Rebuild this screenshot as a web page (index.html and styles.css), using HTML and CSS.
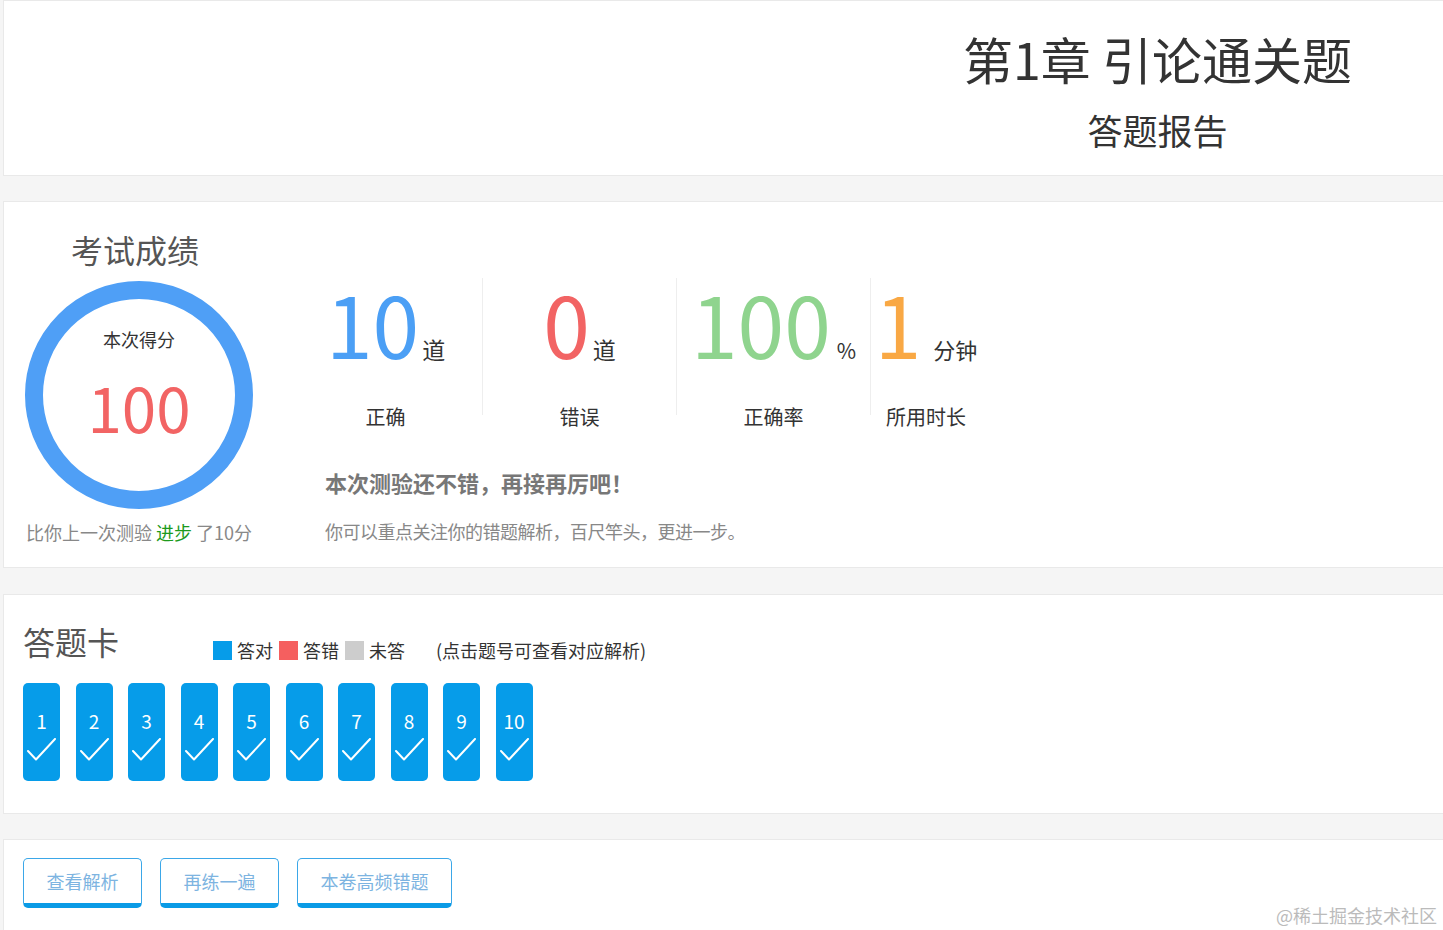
FILE: index.html
```html
<!DOCTYPE html>
<html lang="zh-CN">
<head>
    <meta charset="UTF-8">
    <meta name="viewport" content="width=device-width, initial-scale=1.0">
    <title>答题报告 - 第1章 引论通关题</title>
    <link rel="stylesheet" href="styles.css">
</head>
<body>
    <!-- 标题 -->
    <div class="panel header">
        <div class="header-title">
            <h1>第1章 引论通关题</h1>
            <h2>答题报告</h2>
        </div>
    </div>

    <!-- 考试成绩 -->
    <div class="panel result">
        <div class="score-box">
            <h3>考试成绩</h3>
            <div class="score-ring">
                <p class="score-label">本次得分</p>
                <p class="score-num">100</p>
            </div>
            <p class="score-compare">比你上一次测验 <span class="up">进步</span> 了10分</p>
        </div>

        <div class="detail">
            <div class="stats">
                <div class="stat">
                    <div class="stat-value"><span class="num blue">10</span><span class="unit">道</span></div>
                    <p class="stat-label">正确</p>
                </div>
                <div class="stat">
                    <div class="stat-value"><span class="num red">0</span><span class="unit">道</span></div>
                    <p class="stat-label">错误</p>
                </div>
                <div class="stat">
                    <div class="stat-value"><span class="num green">100</span><span class="unit small">%</span></div>
                    <p class="stat-label">正确率</p>
                </div>
                <div class="stat last">
                    <div class="stat-value"><span class="num orange">1</span><span class="unit wide">分钟</span></div>
                    <p class="stat-label">所用时长</p>
                </div>
            </div>
            <p class="comment">本次测验还不错，再接再厉吧！</p>
            <p class="advice">你可以重点关注你的错题解析，百尺竿头，更进一步。</p>
        </div>
    </div>

    <!-- 答题卡 -->
    <div class="panel card-panel">
        <div class="card-head">
            <h3>答题卡</h3>
            <div class="legend">
                <span class="dot dot-right"></span><span>答对</span>
                <span class="dot dot-wrong"></span><span>答错</span>
                <span class="dot dot-none"></span><span>未答</span>
                <span class="tip">(点击题号可查看对应解析)</span>
            </div>
        </div>
        <div class="cards">
            <div class="q-card"><span>1</span><svg viewBox="0 0 37 30"><polyline points="5,13 13,21.5 32,1"/></svg></div>
            <div class="q-card"><span>2</span><svg viewBox="0 0 37 30"><polyline points="5,13 13,21.5 32,1"/></svg></div>
            <div class="q-card"><span>3</span><svg viewBox="0 0 37 30"><polyline points="5,13 13,21.5 32,1"/></svg></div>
            <div class="q-card"><span>4</span><svg viewBox="0 0 37 30"><polyline points="5,13 13,21.5 32,1"/></svg></div>
            <div class="q-card"><span>5</span><svg viewBox="0 0 37 30"><polyline points="5,13 13,21.5 32,1"/></svg></div>
            <div class="q-card"><span>6</span><svg viewBox="0 0 37 30"><polyline points="5,13 13,21.5 32,1"/></svg></div>
            <div class="q-card"><span>7</span><svg viewBox="0 0 37 30"><polyline points="5,13 13,21.5 32,1"/></svg></div>
            <div class="q-card"><span>8</span><svg viewBox="0 0 37 30"><polyline points="5,13 13,21.5 32,1"/></svg></div>
            <div class="q-card"><span>9</span><svg viewBox="0 0 37 30"><polyline points="5,13 13,21.5 32,1"/></svg></div>
            <div class="q-card"><span>10</span><svg viewBox="0 0 37 30"><polyline points="5,13 13,21.5 32,1"/></svg></div>
        </div>
    </div>

    <!-- 操作按钮 -->
    <div class="panel actions">
        <button class="btn">查看解析</button>
        <button class="btn">再练一遍</button>
        <button class="btn">本卷高频错题</button>
        <span class="watermark">@稀土掘金技术社区</span>
    </div>
</body>
</html>
```

FILE: styles.css
```css
html, body {
    height: 100%;
}

body {
    font-family: "Microsoft YaHei", "Noto Sans CJK SC", sans-serif;
    background: #f5f5f5;
    margin: 0;
    padding: 0 0 0 3px;
    overflow: hidden;
    color: #333;
}

p, h1, h2, h3 {
    margin: 0;
    font-weight: normal;
}

.panel {
    background: #fff;
    border: 1px solid #e9e9e9;
    margin-right: -20px;
    box-sizing: border-box;
}

/* 标题 */
.header {
    height: 176px;
    display: flex;
    justify-content: flex-end;
    padding: 27px 110px 0 0;
}

.header-title {
    text-align: center;
}

.header h1 {
    font-size: 50px;
    line-height: 60px;
    color: #333;
}

.header h2 {
    font-size: 35px;
    line-height: 40px;
    margin-top: 22px;
    color: #333;
}

/* 考试成绩 */
.result {
    margin-top: 25px;
    height: 367px;
    display: flex;
    padding: 0 0 0 19px;
}

.score-box {
    width: 232px;
    display: flex;
    flex-direction: column;
    align-items: center;
}

.score-box h3 {
    font-size: 32px;
    line-height: 40px;
    margin-top: 27px;
    margin-left: -8px;
    color: #555;
}

.score-ring {
    width: 228px;
    height: 228px;
    border: 18px solid #4f9ff6;
    border-radius: 50%;
    box-sizing: border-box;
    margin-top: 12px;
    text-align: center;
}

.score-label {
    font-size: 18px;
    line-height: 24px;
    margin-top: 28px;
    color: #333;
}

.score-num {
    font-size: 62px;
    line-height: 70px;
    margin-top: 20px;
    color: #f26464;
}

.score-compare {
    font-size: 18px;
    line-height: 24px;
    margin-top: 11px;
    color: #888;
    white-space: nowrap;
}

.score-compare .up {
    color: #1c9a1c;
}

.detail {
    margin-left: 34px;
}

.stats {
    display: flex;
    margin-top: 76px;
}

.stat {
    width: 194px;
    height: 137px;
    border-right: 1px solid #eee;
    box-sizing: border-box;
    text-align: center;
}

.stat.last {
    width: 110px;
    border-right: none;
}

.stat-value {
    height: 88px;
    padding-top: 3px;
    white-space: nowrap;
}

.num {
    font-size: 84px;
    line-height: 84px;
}

.unit {
    font-size: 23px;
    margin-left: 3px;
    color: #333;
}

.unit.small {
    font-size: 21px;
    margin-left: 6px;
}

.unit.wide {
    font-size: 22px;
    margin-left: 12px;
}

.blue { color: #4b9ff5; }
.red { color: #f26464; }
.green { color: #8fd48e; }
.orange { color: #f9a844; }

.stat-label {
    font-size: 20px;
    line-height: 24px;
    margin-top: 36px;
    color: #333;
}

.comment {
    font-size: 22px;
    line-height: 30px;
    font-weight: bold;
    color: #777;
    margin-top: 52px;
    margin-left: 36px;
}

.advice {
    font-size: 18px;
    line-height: 24px;
    color: #888;
    margin-top: 22px;
    margin-left: 36px;
    letter-spacing: -0.5px;
}

/* 答题卡 */
.card-panel {
    margin-top: 26px;
    height: 220px;
    padding: 24px 0 0 19px;
}

.card-head {
    display: flex;
    align-items: flex-end;
}

.card-head h3 {
    font-size: 32px;
    line-height: 44px;
    color: #555;
}

.legend {
    display: flex;
    align-items: center;
    font-size: 18px;
    line-height: 24px;
    margin-left: 94px;
    padding-bottom: 1px;
    color: #333;
}

.dot {
    width: 19px;
    height: 19px;
    margin: 0 5px 0 0;
}

.legend span + .dot {
    margin-left: 6px;
}

.dot-right { background: #069ce9; }
.dot-wrong { background: #f55f5f; }
.dot-none { background: #cdcdcd; }

.tip {
    margin-left: 31px;
}

.cards {
    display: flex;
    gap: 15.5px;
    margin-top: 20px;
}

.q-card {
    width: 37px;
    height: 98px;
    background: #069ce9;
    border-radius: 5px;
    display: flex;
    flex-direction: column;
    align-items: center;
    color: #fff;
}

.q-card span {
    font-size: 19px;
    line-height: 24px;
    margin-top: 26px;
}

.q-card svg {
    width: 37px;
    height: 30px;
    margin-top: 5px;
}

.q-card polyline {
    fill: none;
    stroke: #fff;
    stroke-width: 2;
    stroke-linecap: round;
    stroke-linejoin: round;
}

/* 操作按钮 */
.actions {
    margin-top: 25px;
    height: 100px;
    padding: 18px 0 0 19px;
    display: flex;
    align-items: flex-start;
    gap: 18px;
    position: relative;
}

.btn {
    height: 50px;
    padding: 0 22.5px;
    background: #fff;
    border: 1px solid #3ba7e8;
    border-bottom: 5px solid #0a9be6;
    border-radius: 5px;
    font-family: inherit;
    font-size: 18px;
    color: #7db4e1;
    cursor: pointer;
}

.watermark {
    position: absolute;
    right: 25px;
    top: 62px;
    font-size: 18px;
    color: #bbb;
}
```
